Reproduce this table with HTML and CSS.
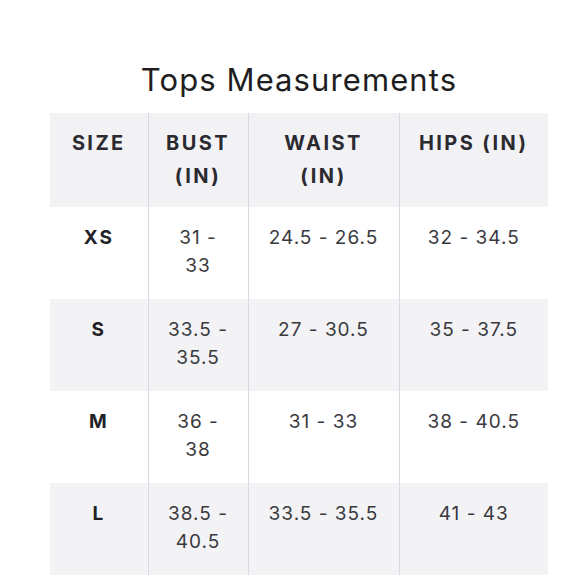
FILE: index.html
```html
<!DOCTYPE html>
<html lang="en">
<head>
<meta charset="utf-8">
<title>Tops Measurements</title>
<link rel="stylesheet" href="styles.css">
</head>
<body>
<main class="chart">
  <h1 class="chart-title">Tops Measurements</h1>
  <table class="size-table">
    <colgroup>
      <col class="col-size">
      <col class="col-bust">
      <col class="col-waist">
      <col class="col-hips">
    </colgroup>
    <thead>
      <tr class="head-row">
        <th>SIZE</th>
        <th>BUST<br>(IN)</th>
        <th>WAIST<br>(IN)</th>
        <th>HIPS (IN)</th>
      </tr>
    </thead>
    <tbody>
      <tr class="row">
        <td class="size">XS</td>
        <td>31 -<br>33</td>
        <td>24.5 - 26.5</td>
        <td>32 - 34.5</td>
      </tr>
      <tr class="row row-alt">
        <td class="size">S</td>
        <td>33.5 -<br>35.5</td>
        <td>27 - 30.5</td>
        <td>35 - 37.5</td>
      </tr>
      <tr class="row">
        <td class="size">M</td>
        <td>36 -<br>38</td>
        <td>31 - 33</td>
        <td>38 - 40.5</td>
      </tr>
      <tr class="row row-alt">
        <td class="size">L</td>
        <td>38.5 -<br>40.5</td>
        <td>33.5 - 35.5</td>
        <td>41 - 43</td>
      </tr>
    </tbody>
  </table>
</main>
</body>
</html>
```

FILE: styles.css
```css
html, body {
  margin: 0;
  padding: 0;
  background: #ffffff;
}

body {
  font-family: Inter, "Noto Sans", "Liberation Sans", sans-serif;
  color: #333338;
}

.chart {
  width: 498px;
  margin-left: 50px;
  padding-top: 61px;
}

.chart-title {
  margin: 0 0 15px;
  font-size: 31px;
  line-height: 37px;
  font-weight: 400;
  letter-spacing: 1.1px;
  text-align: center;
  color: #1e1e22;
}

.size-table {
  width: 498px;
  border-collapse: collapse;
  table-layout: fixed;
}

.col-size { width: 98px; }
.col-bust { width: 100px; }
.col-waist { width: 151px; }
.col-hips { width: 149px; }

.size-table th,
.size-table td {
  text-align: center;
  vertical-align: top;
  padding: 0;
  border-left: 1.5px solid #d8d8e0;
}

.size-table th:first-child,
.size-table td:first-child {
  border-left: none;
}

.head-row {
  height: 94px;
  background: #f2f2f5;
}

.head-row th {
  padding-top: 14px;
  font-size: 20px;
  line-height: 33px;
  font-weight: 700;
  letter-spacing: 2.4px;
  color: #2a2a30;
}

.row {
  height: 92px;
  background: #ffffff;
}

.row-alt {
  background: #f3f3f6;
}

.row td {
  padding-top: 17px;
  font-size: 19px;
  line-height: 28px;
  font-weight: 400;
  letter-spacing: 1px;
  color: #3a3a3e;
}

.row td.size {
  font-weight: 700;
  color: #222226;
  letter-spacing: 2px;
}
```
